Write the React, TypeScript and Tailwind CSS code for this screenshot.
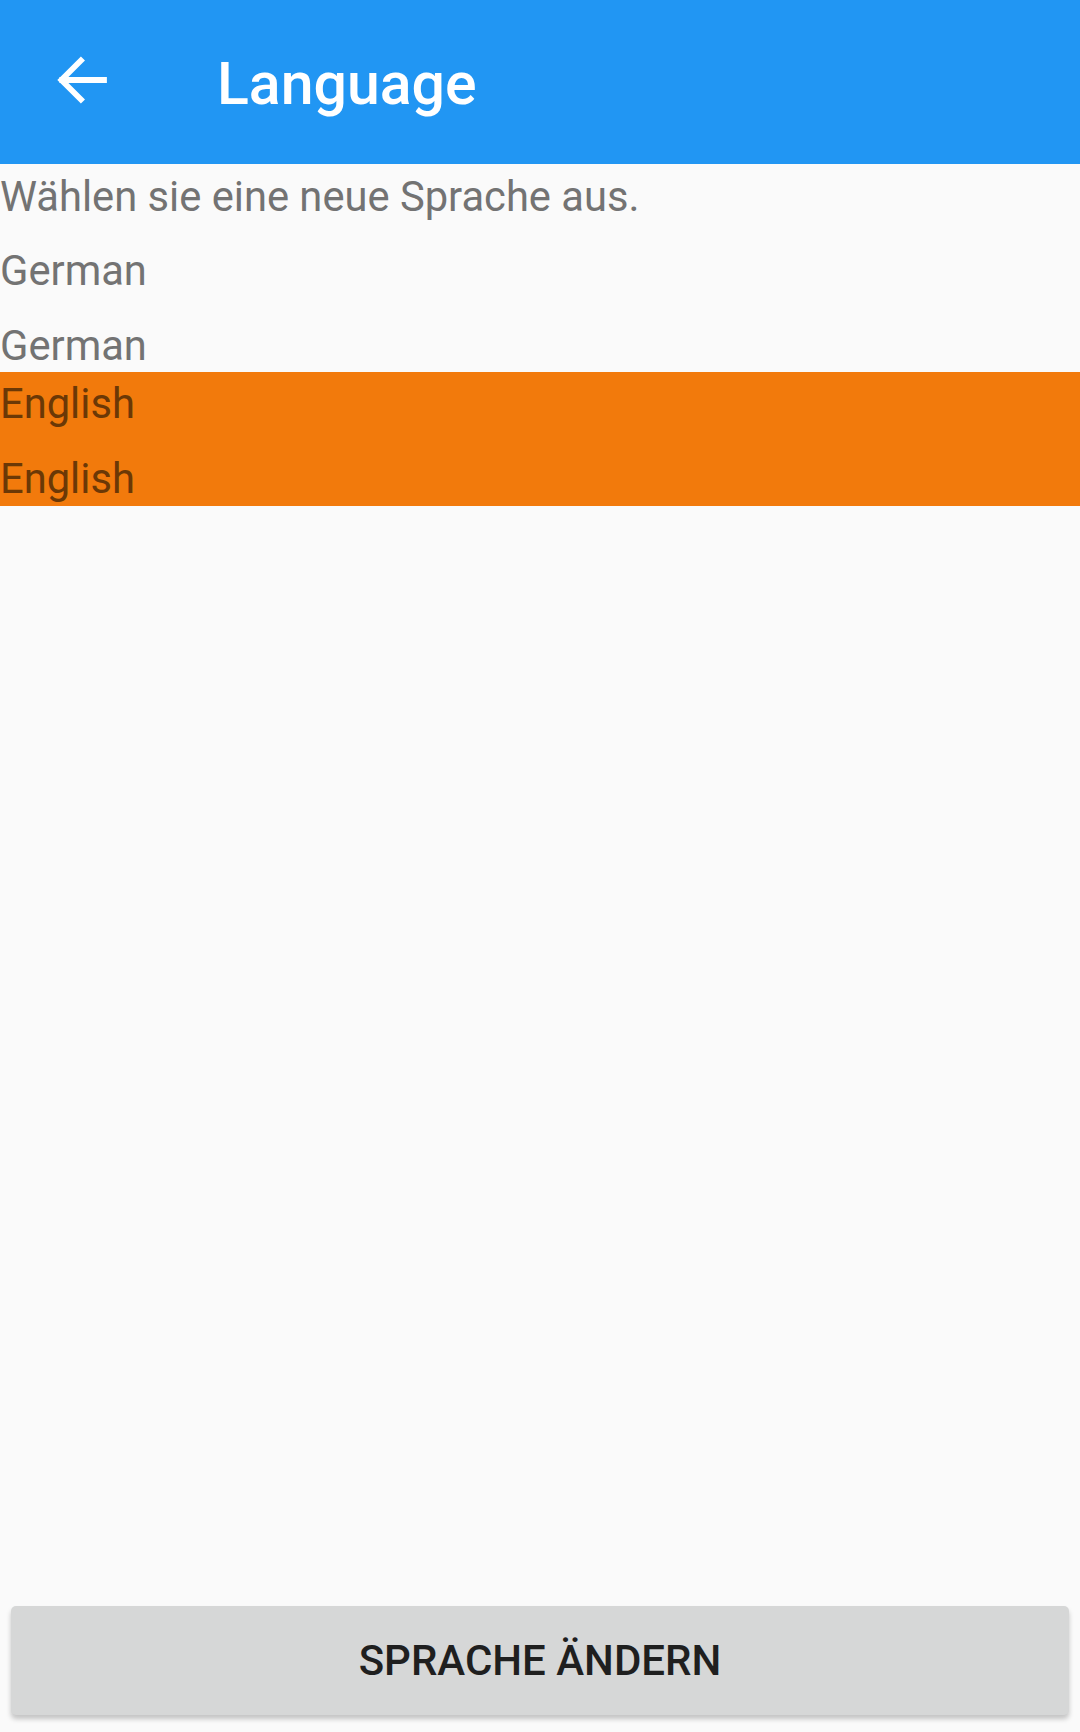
import React from "react";

export default function App() {
  const font = { fontFamily: "Roboto, 'Noto Sans', sans-serif" };
  return (
    <div className="flex h-[1732px] w-[1080px] flex-col bg-[#fafafa]" style={font}>
      <header className="flex h-[164px] shrink-0 items-center bg-[#2196F3]">
        <div className="mb-[4px] ml-[49px] flex h-[66px] w-[66px] items-center justify-center">
          <svg width="66" height="66" viewBox="0 0 24 24" fill="none">
            <path d="M20 12H4.8M11.6 4.9L4.5 12l7.1 7.1" stroke="#ffffff" strokeWidth="2.1" strokeLinecap="square" />
          </svg>
        </div>
        <h1 className="ml-[102px] mt-[2px] text-[59px] font-medium leading-none text-white">Language</h1>
      </header>

      <div className="flex flex-col text-[41.7px] leading-[48px] text-[#737373]">
        <p className="mt-[9px]">Wählen sie eine neue Sprache aus.</p>
        <div className="mt-[18px] flex flex-col pt-[8px] pb-[2px]">
          <span>German</span>
          <span className="mt-[27px]">German</span>
        </div>
        <div className="flex flex-col bg-[#F27A0C] pt-[8px] pb-[3px] text-[#6b3806]">
          <span>English</span>
          <span className="mt-[27px]">English</span>
        </div>
      </div>

      <div className="flex-1" />

      <button className="mx-[11px] mb-[17px] flex h-[109px] items-center justify-center rounded-[5px] bg-[#d6d7d7] text-[42px] font-medium uppercase text-[#1f1f1f] shadow-[0_4px_5px_rgba(0,0,0,0.22)]">
        Sprache ändern
      </button>
    </div>
  );
}
